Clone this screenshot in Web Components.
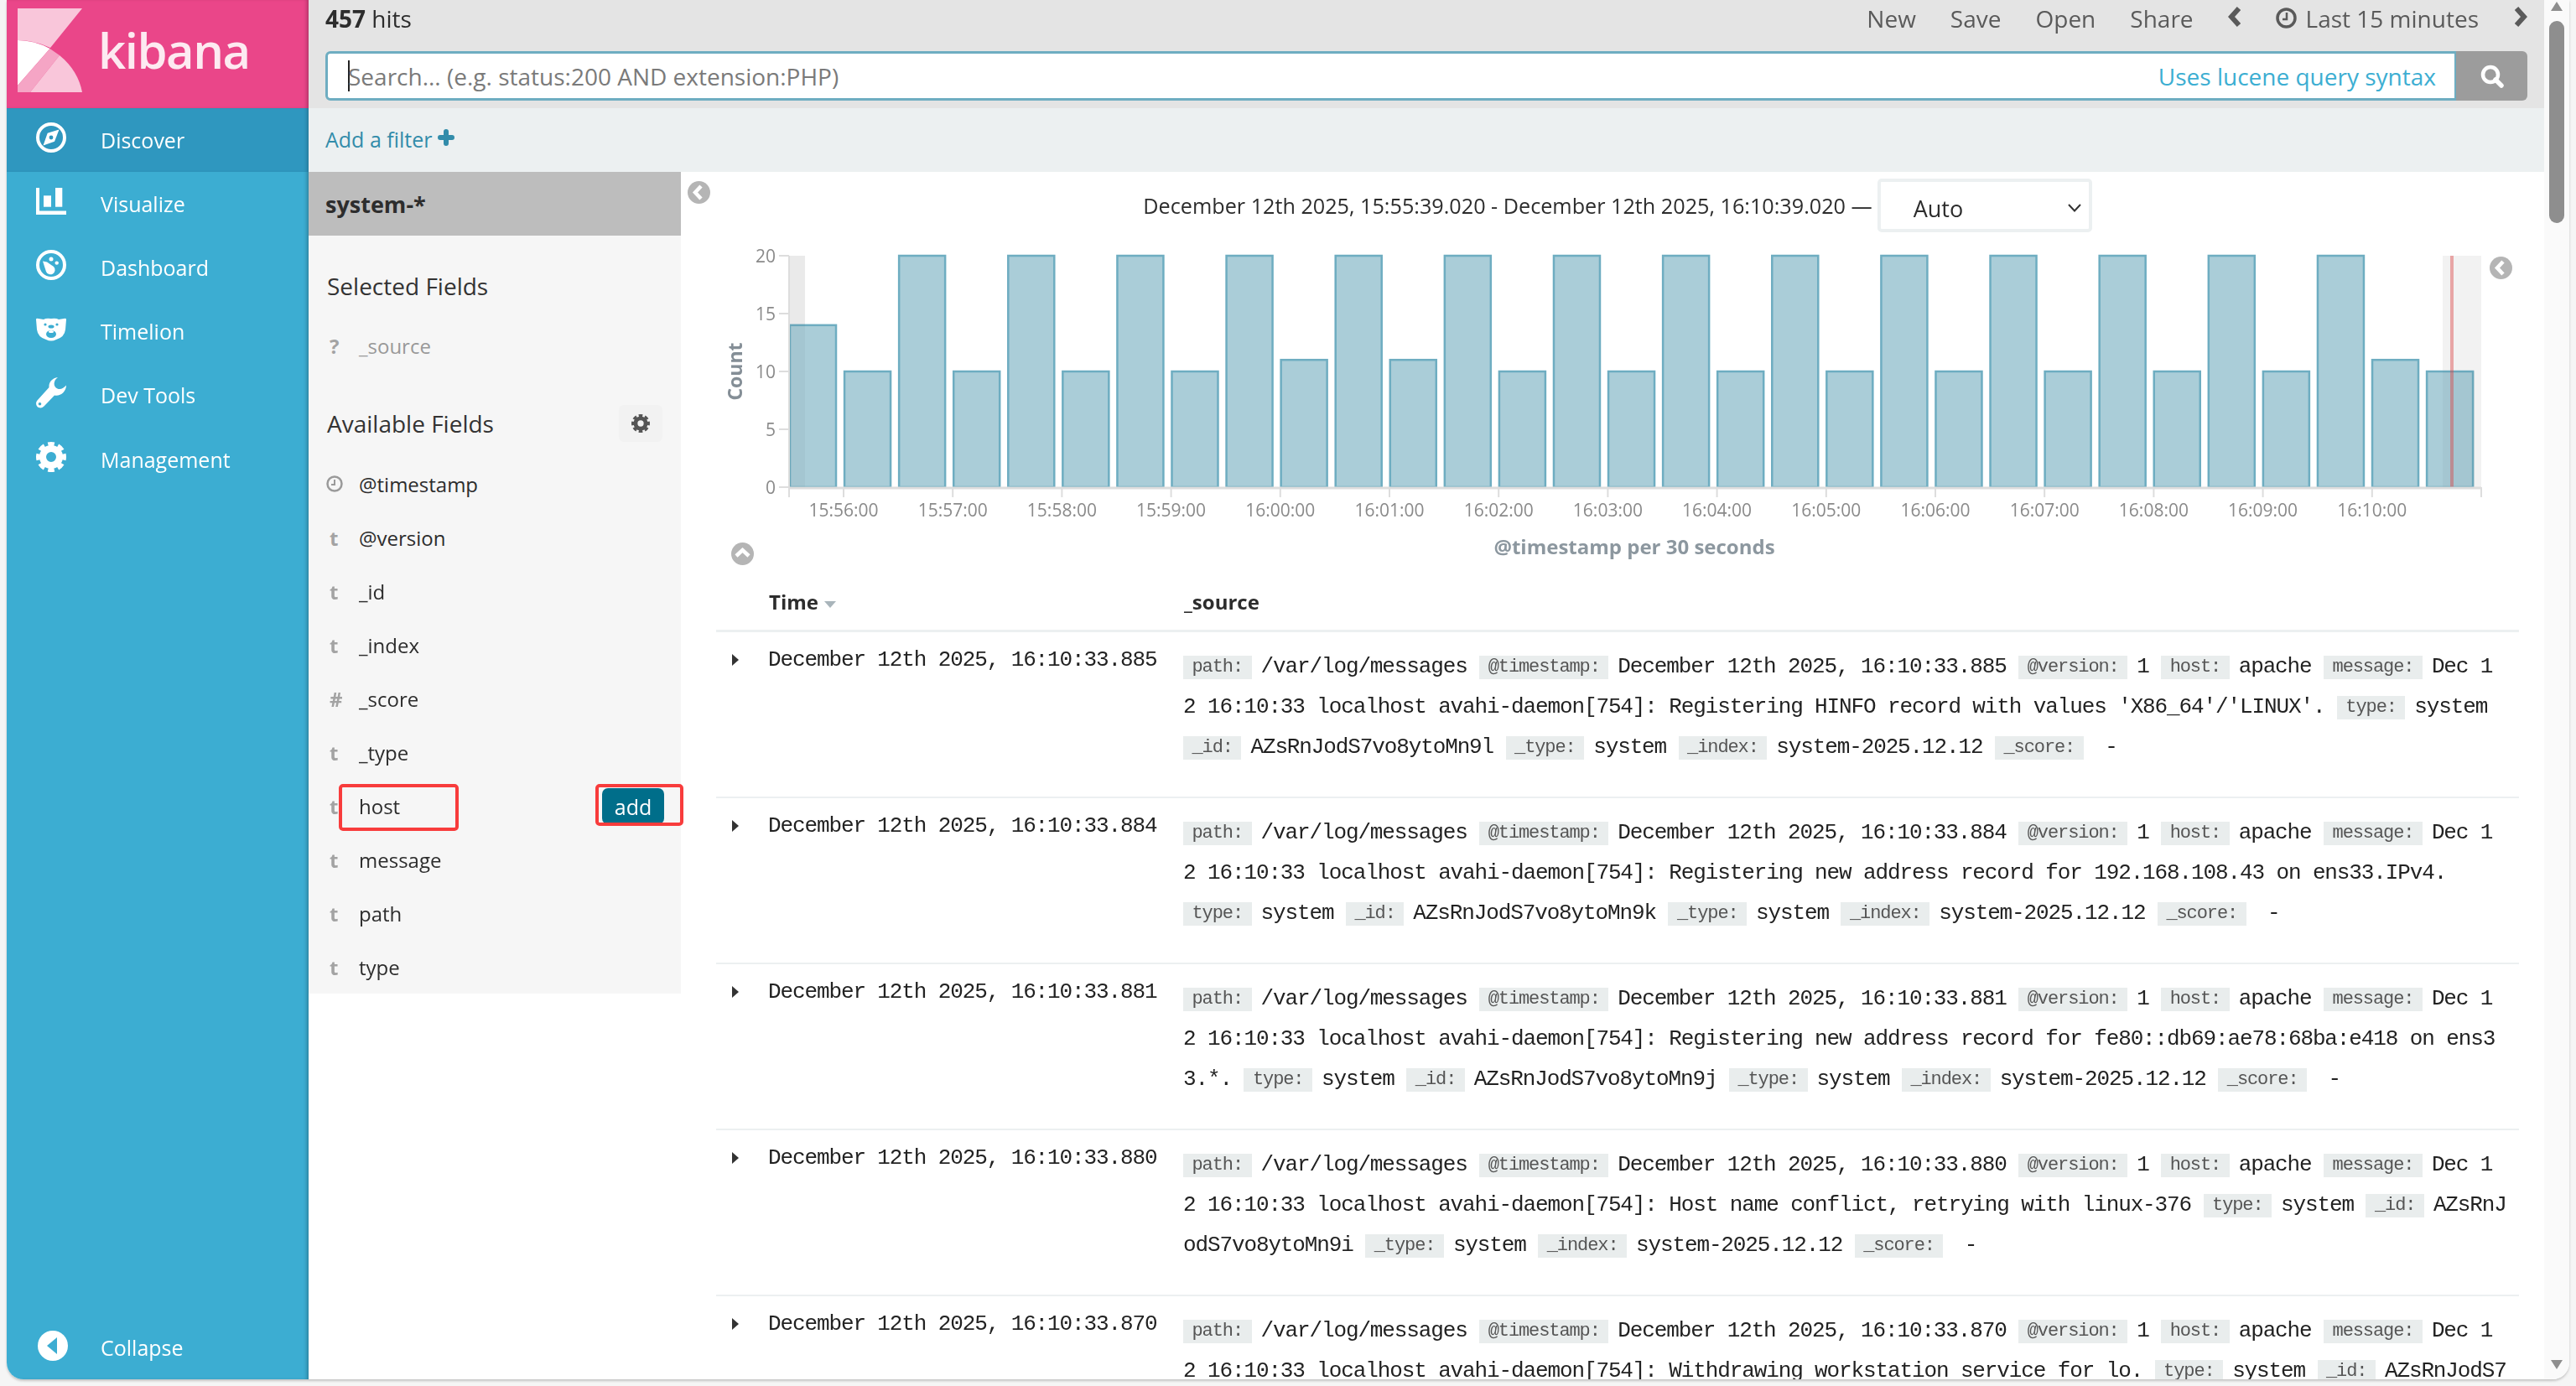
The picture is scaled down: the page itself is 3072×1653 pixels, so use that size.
<!DOCTYPE html>
<html>
<head>
<meta charset="utf-8">
<title>Discover - Kibana</title>
<style>
  html, body { margin: 0; height: 100%; background: #f5f5f5; font-family: "Open Sans", sans-serif; overflow: hidden; }
</style>
</head>
<body>

<kbn-app>
  <kbn-sidebar slot="sidebar"></kbn-sidebar>
  <kbn-topbar slot="top" hits="457"></kbn-topbar>
  <kbn-filterbar slot="top"></kbn-filterbar>
  <kbn-fields slot="fields"></kbn-fields>
  <kbn-histogram slot="content"></kbn-histogram>
  <kbn-doctable slot="content">
    <log-row time="December 12th 2025, 16:10:33.885"><log-tag>path:</log-tag>/var/log/messages <log-tag>@timestamp:</log-tag>December 12th 2025, 16:10:33.885 <log-tag>@version:</log-tag>1 <log-tag>host:</log-tag>apache <log-tag>message:</log-tag>Dec 1<br>2 16:10:33 localhost avahi-daemon[754]: Registering HINFO record with values 'X86_64'/'LINUX'. <log-tag>type:</log-tag>system<br><log-tag>_id:</log-tag>AZsRnJodS7vo8ytoMn9l <log-tag>_type:</log-tag>system <log-tag>_index:</log-tag>system-2025.12.12 <log-tag>_score:</log-tag> -</log-row>
    <log-row time="December 12th 2025, 16:10:33.884"><log-tag>path:</log-tag>/var/log/messages <log-tag>@timestamp:</log-tag>December 12th 2025, 16:10:33.884 <log-tag>@version:</log-tag>1 <log-tag>host:</log-tag>apache <log-tag>message:</log-tag>Dec 1<br>2 16:10:33 localhost avahi-daemon[754]: Registering new address record for 192.168.108.43 on ens33.IPv4.<br><log-tag>type:</log-tag>system <log-tag>_id:</log-tag>AZsRnJodS7vo8ytoMn9k <log-tag>_type:</log-tag>system <log-tag>_index:</log-tag>system-2025.12.12 <log-tag>_score:</log-tag> -</log-row>
    <log-row time="December 12th 2025, 16:10:33.881"><log-tag>path:</log-tag>/var/log/messages <log-tag>@timestamp:</log-tag>December 12th 2025, 16:10:33.881 <log-tag>@version:</log-tag>1 <log-tag>host:</log-tag>apache <log-tag>message:</log-tag>Dec 1<br>2 16:10:33 localhost avahi-daemon[754]: Registering new address record for fe80::db69:ae78:68ba:e418 on ens3<br>3.*. <log-tag>type:</log-tag>system <log-tag>_id:</log-tag>AZsRnJodS7vo8ytoMn9j <log-tag>_type:</log-tag>system <log-tag>_index:</log-tag>system-2025.12.12 <log-tag>_score:</log-tag> -</log-row>
    <log-row time="December 12th 2025, 16:10:33.880"><log-tag>path:</log-tag>/var/log/messages <log-tag>@timestamp:</log-tag>December 12th 2025, 16:10:33.880 <log-tag>@version:</log-tag>1 <log-tag>host:</log-tag>apache <log-tag>message:</log-tag>Dec 1<br>2 16:10:33 localhost avahi-daemon[754]: Host name conflict, retrying with linux-376 <log-tag>type:</log-tag>system <log-tag>_id:</log-tag>AZsRnJ<br>odS7vo8ytoMn9i <log-tag>_type:</log-tag>system <log-tag>_index:</log-tag>system-2025.12.12 <log-tag>_score:</log-tag> -</log-row>
    <log-row time="December 12th 2025, 16:10:33.870"><log-tag>path:</log-tag>/var/log/messages <log-tag>@timestamp:</log-tag>December 12th 2025, 16:10:33.870 <log-tag>@version:</log-tag>1 <log-tag>host:</log-tag>apache <log-tag>message:</log-tag>Dec 1<br>2 16:10:33 localhost avahi-daemon[754]: Withdrawing workstation service for lo. <log-tag>type:</log-tag>system <log-tag>_id:</log-tag>AZsRnJodS7</log-row>
  </kbn-doctable>
</kbn-app>

<script>
// small helper so every element below reads the same
function shadow(el, html) {
  el.attachShadow({ mode: 'open' }).innerHTML = html;
}

const gearIcon = (size, color) => `
  <svg width="${size}" height="${size}" viewBox="0 0 36 36" fill="none" stroke="${color}">
    <circle cx="18" cy="18" r="10" stroke-width="8"/>
    <circle cx="18" cy="18" r="15" stroke-width="6" pathLength="64" stroke-dasharray="5 3" stroke-dashoffset="2.500"/>
  </svg>`;

const roundChevron = (points) => `
  <svg width="27" height="27" viewBox="0 0 27 27">
    <circle cx="13.5" cy="13.5" r="13.5" fill="#b5b5b5"/>
    <polyline points="${points}" fill="none" stroke="#fff" stroke-width="4.5"/>
  </svg>`;

/**
 * The whole window: sidebar, top bars, fields panel, content and scrollbar.
 */
customElements.define('kbn-app', class extends HTMLElement {
  constructor() {
    super();
    shadow(this, `
      <style>
        :host { display: flex; position: fixed; left: 8px; top: 0; width: 3056px; height: 1645px; background: #fff;
                overflow: hidden; border-radius: 0 0 20px 20px; box-shadow: 0 2px 3px rgba(0,0,0,.2); }
        .main { flex: 1; min-width: 0; display: flex; flex-direction: column; }
        .body { flex: 1; min-height: 0; display: flex; }
        .content { flex: 1; min-width: 0; }
        .bar { width: 30px; flex: none; background: #fafafa; position: relative; }
        .thumb { position: absolute; left: 6px; top: 25px; width: 18px; height: 241px; border-radius: 9px; background: #8e8e8e; }
        .up, .down { position: absolute; left: 8px; width: 0; height: 0; border-left: 7.5px solid transparent; border-right: 7.5px solid transparent; }
        .up { top: 2px; border-bottom: 11px solid #8e8e8e; }
        .down { top: 1622px; border-top: 11px solid #8e8e8e; }
      </style>
      <slot name="sidebar"></slot>
      <div class="main">
        <slot name="top"></slot>
        <div class="body">
          <slot name="fields"></slot>
          <div class="content"><slot name="content"></slot></div>
        </div>
      </div>
      <div class="bar"><div class="up"></div><div class="thumb"></div><div class="down"></div></div>
    `);
  }
});

/**
 * Left navigation.
 */
customElements.define('kbn-sidebar', class extends HTMLElement {
  constructor() {
    super();
    const items = [
      ['Discover', `<svg width="36" height="36" viewBox="0 0 36 36"><circle cx="18" cy="18" r="16" fill="none" stroke="#fff" stroke-width="4"/><path d="M27.500 8.500 22 22.700 8.500 27.500 13.700 12.700Z" fill="#fff"/><circle cx="18" cy="18" r="2.400" fill="#2f97bf"/></svg>`],
      ['Visualize', `<svg width="36" height="32" viewBox="0 0 36 32" fill="#fff"><path d="M0 0h4v27.500h32V32H0Z"/><rect x="9" y="9.300" width="9" height="13.400"/><rect x="23" y="0" width="8.300" height="22.700"/></svg>`],
      ['Dashboard', `<svg width="36" height="36" viewBox="0 0 36 36" fill="#fff"><circle cx="18" cy="18" r="16" fill="none" stroke="#fff" stroke-width="4"/><path d="M8 13.500 13 14.500 21 20a5.500 5.500 0 1 1-9 6Z"/><circle cx="18" cy="11" r="2.500"/><circle cx="24.700" cy="15.600" r="2.200"/></svg>`],
      ['Timelion', `<svg width="36" height="29" viewBox="0 0 36 29"><path d="M0 3Q0 1 3 2L9 3Q12 1 18 2 24 1 27 3L33 2Q36 1 36 3L35 15Q34 24 24 27 18 30 12 27 2 24 1 15Z" fill="#fff"/><g fill="#3cadd2"><circle cx="11" cy="9" r="1.600"/><circle cx="25" cy="9" r="1.600"/><ellipse cx="18" cy="11.500" rx="3.500" ry="2"/><ellipse cx="18" cy="20.500" rx="6" ry="4.500"/></g><ellipse cx="18" cy="17.500" rx="3" ry="1.500" fill="#fff"/></svg>`],
      ['Dev Tools', `<svg width="36" height="37" viewBox="0 0 36 37"><path d="M26 0C19 1 15 6 15.500 12L1.500 27.500C-1 30.500 0 34.500 3 36 5.500 37 7.500 36.500 9.500 34.500L22 21.500C29 23 36 17 36 9.500 33 13 29 15 25.500 13.500 22 12 21 8.500 22 5.500 22.500 3 24 1.500 26 0Z" fill="#fff"/><circle cx="4.500" cy="31.800" r="1.800" fill="#3cadd2"/></svg>`],
      ['Management', gearIcon(36, '#fff')]
    ];
    shadow(this, `
      <style>
        :host { display: flex; flex-direction: column; width: 360px; height: 100%; flex: none; background: #3cadd2; color: #fff;
                box-shadow: inset -4px 0 4px -2px rgba(0,0,0,.25); font-size: 25px; }
        .logo { height: 129px; box-sizing: border-box; background: #ea4689; display: flex; align-items: center; gap: 19px; padding: 0 0 0 13px;
                box-shadow: inset -4px 0 4px -2px rgba(0,0,0,.25); }
        .logo span { color: #fdeaf1; font-size: 58px; line-height: 1; font-weight: 600; margin-bottom: 10px; letter-spacing: -1.5px; }
        .logo svg { margin-bottom: 10px; flex: none; }
        .item { height: 76.100px; display: flex; align-items: center; padding-left: 35px; box-sizing: border-box; flex: none; }
        .item i { width: 36px; margin-right: 41px; display: flex; flex: none; margin-top: -6px; }
        .item.active { background: #2f97bf; box-shadow: inset -4px 0 4px -2px rgba(0,0,0,.2); }
        .spacer { flex: 1; }
        .collapse i { margin-left: 2px; margin-right: 39px; margin-top: -3px; }
      </style>
      <div class="logo">
        <svg width="77" height="100" viewBox="0 0 77 100">
          <path d="M0 0H77L39 47Q20 38 0 38Z" fill="#f9c6da"/>
          <path d="M0 38Q20 38 38.500 48L0 92Z" fill="#fff"/>
          <path d="M0 92 38.500 48 50 56 15 100H0Z" fill="#f5a5c5"/>
          <path d="M15 100 50 56Q72 74 77 100Z" fill="#f9c6da"/>
        </svg>
        <span>kibana</span>
      </div>
      ${items.map(([name, icon], i) => `<div class="item ${i === 0 ? 'active' : ''}"><i>${icon}</i><span>${name}</span></div>`).join('')}
      <div class="spacer"></div>
      <div class="item collapse">
        <i><svg width="36" height="36" viewBox="0 0 36 36"><circle cx="18" cy="18" r="18" fill="#fff"/><path d="M23 8v20L11 18Z" fill="#3cadd2"/></svg></i>
        <span>Collapse</span>
      </div>
    `);
  }
});

/**
 * Grey bar with hit count, menu and the search box.
 */
customElements.define('kbn-topbar', class extends HTMLElement {
  constructor() {
    super();
    shadow(this, `
      <style>
        :host { display: block; height: 129px; box-sizing: border-box; background: #e4e4e4; padding: 0 20px; color: #2d2d2d; }
        .row { display: flex; align-items: center; height: 43px; font-size: 28px; }
        b { font-weight: 700; }
        .menu { margin-left: auto; display: flex; align-items: center; color: #5a5a5a; font-size: 28px; }
        .menu > span { margin-right: 41px; }
        .menu svg { flex: none; }
        .search { display: flex; height: 59px; margin-top: 18px; }
        .box { flex: 1; display: flex; align-items: center; box-sizing: border-box; border: 3px solid #6eadc1; border-right-width: 2px;
               border-radius: 6px 0 0 6px; background: #fff; padding: 0 22px 0 24px; font-size: 28px; color: #7a7a7a; }
        .caret { width: 2px; height: 37px; background: #222; margin-right: -2px; }
        .hint { margin-left: auto; color: #3caed2; }
        .go { width: 85px; display: flex; align-items: center; justify-content: center; background: #9c9c9c; border-radius: 0 6px 6px 0; }
      </style>
      <div class="row">
        <span><b>${this.getAttribute('hits')}</b> hits</span>
        <div class="menu">
          <span>New</span><span>Save</span><span>Open</span><span>Share</span>
          <svg width="17" height="26" viewBox="0 0 17 26" style="margin-right:40px;margin-top:-4px"><polyline points="13,3 4,13 13,23" fill="none" stroke="#5a5a5a" stroke-width="6"/></svg>
          <svg width="25" height="25" viewBox="0 0 25 25" style="margin-right:11px"><circle cx="12.500" cy="12.500" r="10.500" fill="none" stroke="#5a5a5a" stroke-width="3.500"/><polyline points="13,6 13,14 8,14" fill="none" stroke="#5a5a5a" stroke-width="2.500"/></svg>
          <span>Last 15 minutes</span>
          <svg width="17" height="26" viewBox="0 0 17 26" style="margin-top:-4px"><polyline points="4,3 13,13 4,23" fill="none" stroke="#5a5a5a" stroke-width="6"/></svg>
        </div>
      </div>
      <div class="search">
        <div class="box"><i class="caret"></i><span>Search... (e.g. status:200 AND extension:PHP)</span><span class="hint">Uses lucene query syntax</span></div>
        <div class="go"><svg width="28" height="28" viewBox="0 0 28 28"><circle cx="12" cy="12" r="9" fill="none" stroke="#fff" stroke-width="4.500"/><path d="M18 18l7 7" stroke="#fff" stroke-width="5.500" stroke-linecap="round"/></svg></div>
      </div>
    `);
  }
});

customElements.define('kbn-filterbar', class extends HTMLElement {
  constructor() {
    super();
    shadow(this, `
      <style>
        :host { display: flex; align-items: center; gap: 7px; height: 76px; background: #ecf0f1; padding: 0 20px 3px; box-sizing: border-box;
                color: #328caa; font-size: 25px; }
        svg { margin-top: -3px; }
      </style>
      <span>Add a filter</span>
      <svg width="20" height="20" viewBox="0 0 20 20"><path d="M10 3v14M3 10h14" stroke="#328caa" stroke-width="6" stroke-linecap="round"/></svg>
    `);
  }
});

/**
 * Field list on the left of the results.
 */
customElements.define('kbn-field', class extends HTMLElement {
  constructor() {
    super();
    const type = this.getAttribute('type');
    const icon = type === 'clock'
      ? `<svg width="20" height="20" viewBox="0 0 20 20"><circle cx="10" cy="10" r="8.500" fill="none" stroke="#9a9a9a" stroke-width="2.500"/><polyline points="10,5 10,11 6,11" fill="none" stroke="#9a9a9a" stroke-width="2"/></svg>`
      : type;
    shadow(this, `
      <style>
        :host { display: flex; align-items: center; height: 64.100px; font-size: 24px; color: #2d2d2d; padding-left: 20px; position: relative; }
        .t { width: 40px; padding-right: 2px; box-sizing: border-box; font-weight: 700; color: #a3a3a3; padding-left: 5px; display: flex; }
        .t svg { margin-left: -4px; }
        :host([muted]) { color: #999; height: 60px; }
      </style>
      <span class="t">${icon}</span><span><slot></slot></span><slot name="over"></slot>
    `);
  }
});

customElements.define('kbn-fields', class extends HTMLElement {
  constructor() {
    super();
    const fields = [['clock', '@timestamp'], ['t', '@version'], ['t', '_id'], ['t', '_index'], ['#', '_score'], ['t', '_type'], ['t', 'host'], ['t', 'message'], ['t', 'path'], ['t', 'type']];
    shadow(this, `
      <style>
        :host { display: block; width: 444px; flex: none; }
        .panel { background: #f6f6f6; height: 980px; box-sizing: border-box; position: relative; }
        .head { height: 76px; background: #bdbdbd; display: flex; align-items: center; padding-left: 20px; font-size: 27px; font-weight: 700; color: #2d2d2d; }
        h3 { margin: 0; font-weight: 400; font-size: 28px; color: #333; padding-left: 22px; display: flex; align-items: center; }
        .sel { padding-top: 37px; height: 45px; }
        .src { margin-top: 19px; }
        .avail { margin-top: 41px; height: 44px; padding-right: 22px; margin-bottom: 18px; justify-content: space-between; }
        .gear { width: 52px; height: 44px; border-radius: 6px; background: #f2f2f2; display: flex; align-items: center; justify-content: center; }
        .mark { position: absolute; box-sizing: border-box; border: 4px solid #f83c3c; border-radius: 5px; }
        .add { position: absolute; left: 350px; top: 735px; width: 74px; height: 43px; background: #006e8a; color: #fff; border-radius: 7px;
               font-size: 25px; display: flex; align-items: center; justify-content: center; }
      </style>
      <div class="panel">
        <div class="head">system-*</div>
        <h3 class="sel">Selected Fields</h3>
        <kbn-field class="src" type="?" muted>_source</kbn-field>
        <h3 class="avail">Available Fields<span class="gear">${gearIcon(22, '#555')}</span></h3>
        ${fields.map(([t, n]) => `<kbn-field type="${t}">${n}</kbn-field>`).join('')}
        <div class="mark" style="left:36px;top:730px;width:143px;height:56px"></div>
        <div class="add">add</div>
        <div class="mark" style="left:342px;top:730px;width:105px;height:50px"></div>
      </div>
    `);
  }
});

/**
 * Date range row and the bar chart. The chart is a free canvas so it is plain svg.
 */
customElements.define('kbn-histogram', class extends HTMLElement {
  constructor() {
    super();
    const counts = [14, 10, 20, 10, 20, 10, 20, 10, 20, 11, 20, 11, 20, 10, 20, 10, 20, 10, 20, 10, 20, 10, 20, 10, 20, 10, 20, 10, 20, 11, 10];
    // positions are relative to the svg, which starts at x=812 y=280 on the page
    const x0 = 129, yBase = 301, unit = 13.8, pitch = 65.07, tickPitch = 130.2;
    const bars = counts.map((c, i) => {
      const h = c * unit;
      return `<rect x="${x0 + 1 + i * pitch}" y="${yBase - h}" width="55" height="${h}" fill="#aacdd8" stroke="#6eadc1" stroke-width="2.500"/>`;
    }).join('');
    const times = ['15:56:00', '15:57:00', '15:58:00', '15:59:00', '16:00:00', '16:01:00', '16:02:00', '16:03:00', '16:04:00', '16:05:00', '16:06:00', '16:07:00', '16:08:00', '16:09:00', '16:10:00'];
    const xTicks = times.map((t, i) => {
      const x = 194 + i * tickPitch;
      return `<line x1="${x}" x2="${x}" y1="${yBase}" y2="${yBase + 12}" stroke="#ddd" stroke-width="2"/>
              <text x="${x}" y="${yBase + 35}" text-anchor="middle" class="tick">${t}</text>`;
    }).join('');
    const yTicks = [0, 5, 10, 15, 20].map((v) => {
      const y = yBase - v * unit;
      return `<line x1="117" x2="${x0}" y1="${y}" y2="${y}" stroke="#ddd" stroke-width="2"/>
              <text x="113" y="${y + 8}" text-anchor="end" class="tick">${v}</text>`;
    }).join('');
    shadow(this, `
      <style>
        :host { display: block; position: relative; height: 484px; }
        .range { display: flex; justify-content: center; align-items: center; gap: 6px; height: 64px; padding: 8px 0 0 12px; font-size: 25.200px; color: #2d2d2d; }
        .select { width: 256px; height: 64px; box-sizing: border-box; border: 4px solid #ecf0f1; border-radius: 5px; display: flex; align-items: center;
                  justify-content: space-between; padding: 6px 9px 0 39px; font-size: 27px; }
        .toggle { position: absolute; }
        svg.chart { display: block; margin-top: 3px; }
        .tick { font: 21px "Open Sans", sans-serif; fill: #8a8a8a; }
        .title { font: 700 24px "Open Sans", sans-serif; fill: #8c979f; }
      </style>
      <div class="toggle" style="left:8px;top:11px">${roundChevron('16,6 9,13.5 16,21')}</div>
      <div class="toggle" style="left:2157px;top:101px">${roundChevron('16,6 9,13.5 16,21')}</div>
      <div class="toggle" style="left:60px;top:442px">${roundChevron('6,16 13.500,9 21,16')}</div>
      <div class="range">
        <span>December 12th 2025, 15:55:39.020 - December 12th 2025, 16:10:39.020 —</span>
        <div class="select"><span>Auto</span>
          <svg width="16" height="10" viewBox="0 0 16 10"><polyline points="1,1 8,8.500 15,1" fill="none" stroke="#333" stroke-width="2"/></svg>
        </div>
      </div>
      <svg class="chart" width="2222" height="400" viewBox="0 0 2222 400">
        <rect x="${x0}" y="25" width="19" height="276" fill="#f2f2f2"/>
        <rect x="2101" y="25" width="46" height="276" fill="#f2f2f2"/>
        ${bars}
        <rect x="129" y="25" width="19" height="276" fill="rgba(0,0,0,.03)"/>
        <rect x="2101" y="${yBase - 138}" width="38" height="138" fill="rgba(0,0,0,.03)"/>
        <rect x="2110" y="25" width="4" height="276" fill="rgba(220,60,60,.42)"/>
        <line x1="${x0}" x2="${x0}" y1="25" y2="${yBase + 12}" stroke="#ddd" stroke-width="2"/>
        <line x1="${x0}" x2="2147" y1="${yBase + 1}" y2="${yBase + 1}" stroke="#ddd" stroke-width="3"/>
        <line x1="2147" x2="2147" y1="${yBase}" y2="${yBase + 12}" stroke="#ddd" stroke-width="2"/>
        ${yTicks}
        ${xTicks}
        <text transform="translate(73 163) rotate(-90)" text-anchor="middle" class="title" style="font-size:23px;fill:#848e96">Count</text>
        <text x="1137" y="381" text-anchor="middle" class="title">@timestamp per 30 seconds</text>
      </svg>
    `);
  }
});

/**
 * Results table.
 */
customElements.define('kbn-doctable', class extends HTMLElement {
  constructor() {
    super();
    shadow(this, `
      <style>
        :host { display: block; padding: 0 30px 0 42px; color: #2d2d2d; }
        .head { display: flex; align-items: center; height: 66px; box-sizing: border-box; border-bottom: 3px solid #ecf0f1; font-size: 24px; font-weight: 700; padding: 0 0 4px 63px; margin-top: -1px; }
        .time { width: 495px; display: flex; align-items: center; gap: 7px; }
        .time i { width: 0; height: 0; border-left: 7px solid transparent; border-right: 7px solid transparent; border-top: 8px solid #a9b5bb; margin-top: 6px; }
      </style>
      <div class="head"><span class="time">Time <i></i></span><span>_source</span></div>
      <slot></slot>
    `);
  }
});

customElements.define('log-row', class extends HTMLElement {
  constructor() {
    super();
    shadow(this, `
      <style>
        :host { display: flex; height: 198px; box-sizing: border-box; border-bottom: 2px solid #ecf0f1; padding: 17px 0 0 19px;
                font: 26px/48px "Liberation Mono", monospace; letter-spacing: -1.120px; color: #222; white-space: nowrap; }
        .arrow { width: 0; height: 0; margin-top: 9px; border-top: 7px solid transparent; border-bottom: 7px solid transparent; border-left: 8px solid #333; flex: none; }
        .time { width: 530px; padding-left: 35px; box-sizing: border-box; line-height: 32px; flex: none; }
      </style>
      <i class="arrow"></i><div class="time">${this.getAttribute('time')}</div><div class="src"><slot></slot></div>
    `);
  }
});

customElements.define('log-tag', class extends HTMLElement {
  constructor() {
    super();
    shadow(this, `
      <style>
        :host { display: inline-block; height: 28px; padding: 0 10.500px; margin-right: 11px; background: #e9eded;
                font: 22px/28px "Liberation Mono", monospace; letter-spacing: -1.100px; color: #555; vertical-align: 1px; }
      </style>
      <slot></slot>
    `);
  }
});
</script>
</body>
</html>
